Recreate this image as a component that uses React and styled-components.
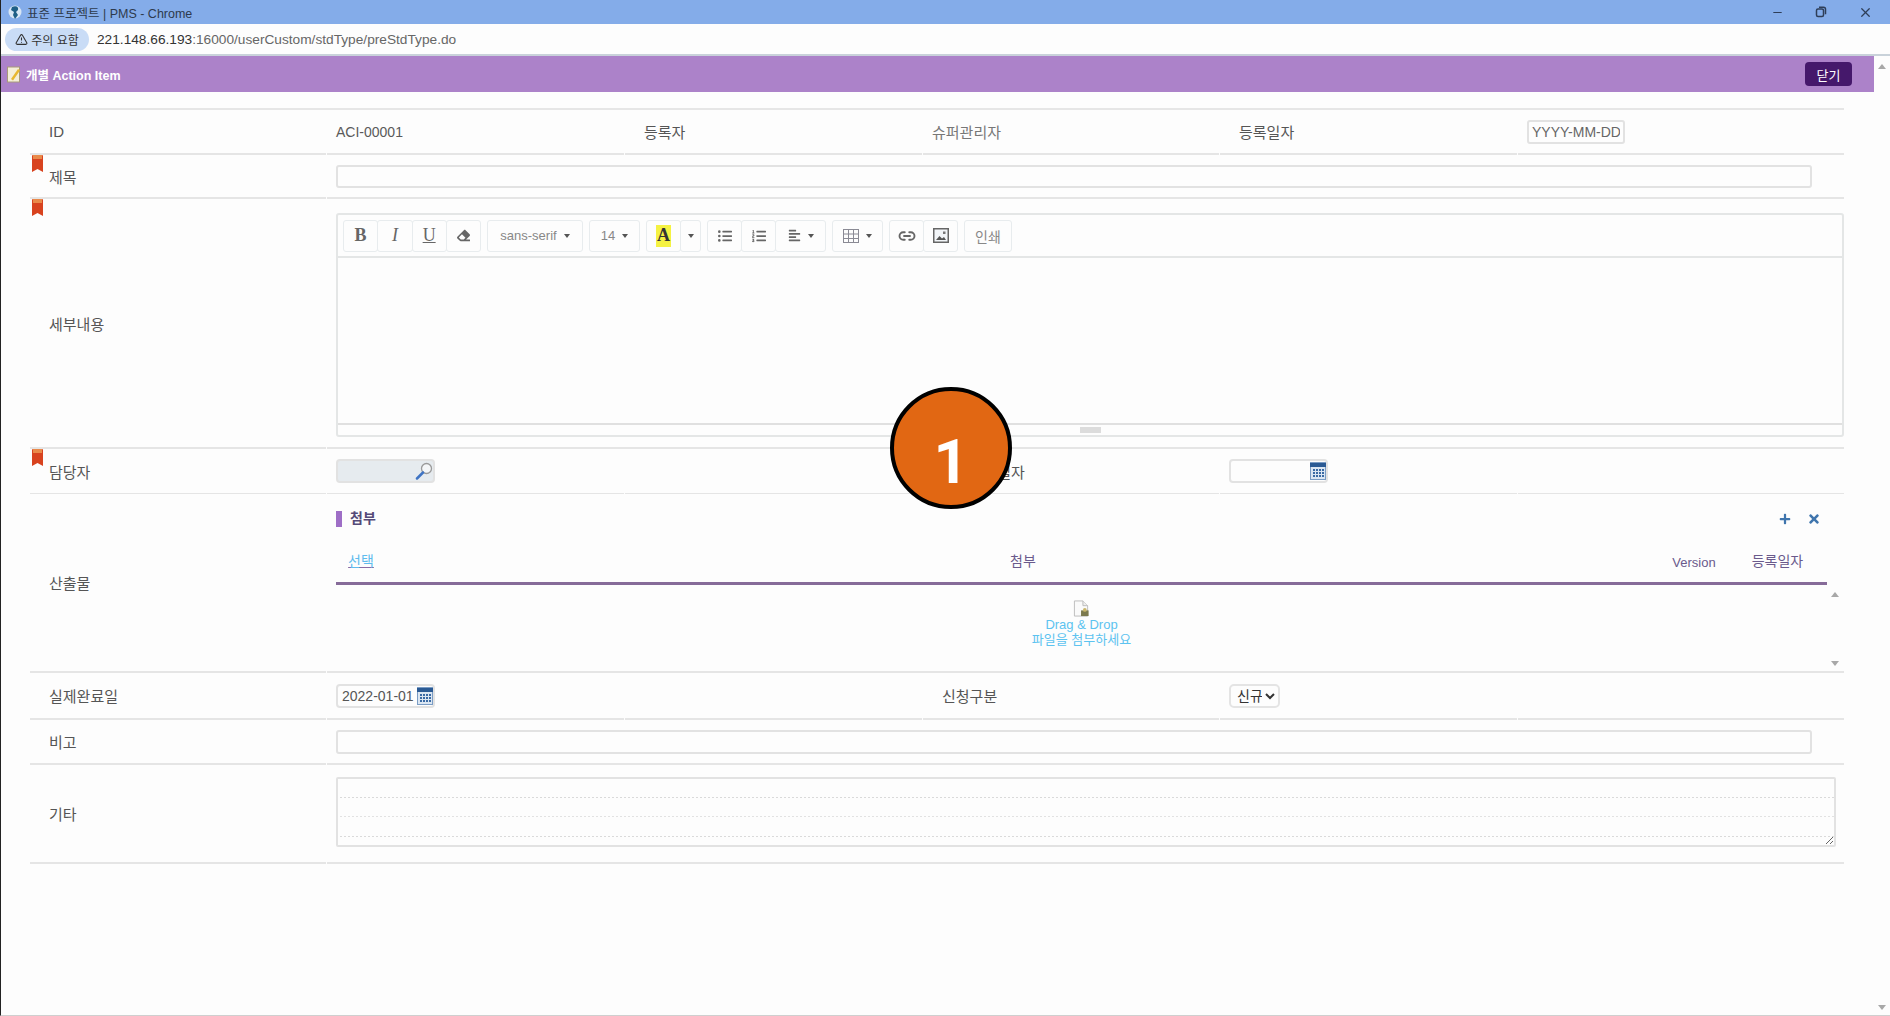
import React from "react";
import styled, { createGlobalStyle } from "styled-components";
import { Minus, X, TriangleAlert, Link2 } from "lucide-react";
import {
	FaEraser,
	FaListUl,
	FaListOl,
	FaAlignLeft,
	FaPlus,
	FaTimes,
} from "react-icons/fa";

const GlobalStyle = createGlobalStyle`
	html, body {
		margin: 0;
		padding: 0;
		background: #fdfdfd;
		overflow: hidden;
	}
	* {
		box-sizing: border-box;
	}
	body {
		font-family: "Liberation Sans", "Noto Sans CJK KR", sans-serif;
		font-size: 14px;
		color: #5a5a5a;
	}
`;

const Page = styled.div`
	width: 1890px;
	height: 1016px;
	display: flex;
	flex-direction: column;
	background: #fdfdfd;
	border-left: 1px solid #222;
	border-bottom: 1px solid #cfcfcf;
	overflow: hidden;
	position: relative;
`;

const TitleBar = styled.div`
	height: 24px;
	flex: none;
	background: #84ace9;
	display: flex;
	align-items: center;
	padding: 0 17px 0 7px;
	gap: 5px;
	font-size: 12.500px;
	color: #2d3a4d;
`;

const TitleText = styled.span`
	flex: 1;
`;

const WindowControls = styled.div`
	display: flex;
	align-items: center;
	gap: 31px;
	color: #2e3e58;
`;

const AddressBar = styled.div`
	height: 32px;
	flex: none;
	background: #fdfdfd;
	border-bottom: 2px solid #c9d2da;
	display: flex;
	align-items: center;
	padding: 0 0 0 4px;
	gap: 8px;
	font-size: 13.700px;
`;

const WarningPill = styled.div`
	width: 84px;
	height: 23px;
	border-radius: 12px;
	background: #c9dcf6;
	display: flex;
	align-items: center;
	justify-content: center;
	gap: 3px;
	font-size: 12px;
	color: #333;
`;

const UrlHost = styled.span`
	color: #333;
`;

const UrlPath = styled.span`
	color: #666;
`;

const Body = styled.div`
	flex: 1;
	display: flex;
	min-height: 0;
`;

const Main = styled.div`
	flex: 1;
	min-width: 0;
`;

const Scrollbar = styled.div`
	width: 16px;
	flex: none;
	display: flex;
	flex-direction: column;
	justify-content: space-between;
	align-items: center;
	padding: 8px 0 5px;
`;

const Arrow = styled.span`
	width: 0;
	height: 0;
	border-left: 4px solid transparent;
	border-right: 4px solid transparent;
	${(p) =>
		p.$down
			? "border-top: 5px solid #a8a8a8;"
			: "border-bottom: 5px solid #a8a8a8;"}
`;

const Header = styled.div`
	height: 36px;
	background: #ac82c9;
	display: flex;
	align-items: center;
	padding: 0 22px 0 6px;
	gap: 5px;
	color: #fff;
	font-size: 12.500px;
	font-weight: 700;
`;

const HeaderTitle = styled.span`
	flex: 1;
`;

const CloseButton = styled.button`
	width: 47px;
	height: 24px;
	border: 0;
	border-radius: 4px;
	background: #45186b;
	color: #fff;
	font: inherit;
	font-size: 13px;
	font-weight: 400;
`;

const Table = styled.div`
	width: 1814px;
	margin: 16px 0 0 29px;
	border-top: 2px solid #e6e6e6;
`;

const Row = styled.div`
	display: grid;
	grid-template-columns: 296px 297px 297px 296px 297px 326px;
	column-gap: 1px;
	height: ${(p) => p.$h}px;
`;

const Cell = styled.div`
	position: relative;
	display: flex;
	align-items: center;
	min-width: 0;
	border-bottom: ${(p) => p.$line || 2}px solid #e5e5e5;
	padding-left: 9px;
	${(p) => p.$span && "grid-column: 2 / -1;"}
`;

const Label = styled(Cell)`
	padding-left: 19px;
	font-size: 15px;
	color: #555;
`;

const KoreanValue = styled(Cell)`
	font-size: 15px;
	color: #777;
`;

const Ribbon = styled.svg`
	position: absolute;
	left: 2px;
	top: 0;
`;

const TextInput = styled.input`
	height: ${(p) => p.$h || 24}px;
	margin-top: ${(p) => p.$mt || 0}px;
	width: ${(p) => p.$w}px;
	border: 2px solid #e2e2e2;
	border-radius: 3px;
	background: #fdfdfd;
	font: inherit;
	font-size: 14px;
	color: #666;
	padding: 0 3px;
	outline: none;
`;

const FieldBox = styled.div`
	width: ${(p) => p.$w}px;
	height: 24px;
	display: flex;
	align-items: center;
	justify-content: space-between;
	border: 2px solid #e2e2e2;
	border-radius: 4px;
	background: ${(p) => p.$bg || "#fdfdfd"};
	padding: 0 0 0 4px;
	color: #555;
	font-size: 14px;
`;

const Select = styled.select`
	width: 51px;
	height: 24px;
	border: 2px solid #e4e4e4;
	border-radius: 5px;
	background: #fdfdfd;
	font: inherit;
	font-size: 14px;
	color: #333;
	padding: 0 0 0 2px;
`;

const Notes = styled.textarea`
	width: 1500px;
	height: 70px;
	margin-top: -3px;
	border: 2px solid #e2e2e2;
	border-radius: 2px;
	outline: none;
	background-color: #fdfdfd;
	background-image: linear-gradient(to right, #dadada 60%, transparent 60%),
		linear-gradient(to right, #e2e2e2 60%, transparent 60%),
		linear-gradient(to right, #dadada 60%, transparent 60%);
	background-size: 4px 1px;
	background-repeat: repeat-x;
	background-position: 2px 18px, 2px 37px, 2px 57px;
`;

const EditorCell = styled(Cell)`
	align-items: flex-start;
	flex-direction: column;
	padding-top: 14px;
`;

const Editor = styled.div`
	width: 100%;
	height: 224px;
	border: 2px solid #e4e6e6;
	border-radius: 3px;
	display: flex;
	flex-direction: column;
`;

const Toolbar = styled.div`
	height: 43px;
	flex: none;
	display: flex;
	align-items: center;
	gap: 6px;
	padding: 0 0 0 5px;
	border-bottom: 2px solid #e4e6e6;
`;

const BtnGroup = styled.div`
	display: flex;
	> * + * {
		margin-left: -1px;
	}
`;

const ToolBtn = styled.div`
	width: ${(p) => p.$w || 35}px;
	height: 32px;
	display: flex;
	align-items: center;
	justify-content: center;
	gap: 7px;
	border: 1px solid #e8ecee;
	border-radius: 3px;
	background: #fdfdfd;
	color: ${(p) => p.$c || "#666"};
	font-size: 13px;
`;

const PrintLabel = styled.span`
	font-size: 14px;
`;

const Glyph = styled.span`
	font-family: "Liberation Serif", serif;
	font-size: 18px;
	font-weight: ${(p) => (p.$b ? 700 : 400)};
	font-style: ${(p) => (p.$i ? "italic" : "normal")};
	text-decoration: ${(p) => (p.$u ? "underline" : "none")};
	color: #666;
`;

const Highlight = styled.span`
	background: #f5f242;
	color: #333;
	font-weight: 700;
	font-size: 18px;
	font-family: "Liberation Serif", serif;
	width: 15px;
	height: 22px;
	display: flex;
	align-items: center;
	justify-content: center;
`;

const Caret = styled.span`
	width: 0;
	height: 0;
	border-left: 3px solid transparent;
	border-right: 3px solid transparent;
	border-top: 4px solid #555;
`;

const EditArea = styled.div`
	flex: 1;
`;

const StatusBar = styled.div`
	height: 12px;
	flex: none;
	border-top: 2px solid #e0e0e0;
	display: flex;
	justify-content: center;
	align-items: center;
`;

const Handle = styled.span`
	width: 21px;
	height: 6px;
	background: #dcdcdc;
`;

const Attach = styled(Cell)`
	flex-direction: column;
	align-items: stretch;
	padding-right: 17px;
	padding-top: 17px;
`;

const SectionHead = styled.div`
	height: 16px;
	display: flex;
	align-items: center;
	gap: 8px;
	color: #554a78;
	font-weight: 700;
	font-size: 14px;
`;

const SectionBar = styled.span`
	width: 6px;
	height: 16px;
	background: #9e6ec6;
`;

const SectionName = styled.span`
	flex: 1;
	margin-top: -4px;
`;

const AttachActions = styled.div`
	display: flex;
	align-items: center;
	gap: 16px;
	color: #3f75ad;
	padding-right: 6px;
`;

const GridHead = styled.div`
	height: 58px;
	flex: none;
	display: grid;
	grid-template-columns: 50px 1fr 68px 99px;
	align-items: end;
	padding-bottom: 12px;
	border-bottom: 3px solid #866b99;
	font-size: 14px;
	color: #6a5a8c;
	text-align: center;
`;

const VersionHead = styled.span`
	font-size: 13px;
`;

const SelectLink = styled.span`
	color: #5fbcee;
	text-decoration: underline;
	text-decoration-color: #8a6ca5;
`;

const DropZone = styled.div`
	position: relative;
	flex: 1;
	display: flex;
	flex-direction: column;
	align-items: center;
	padding-top: 15px;
	color: #5cc3f0;
	font-size: 13px;
	line-height: 15px;
`;

const ZoneArrows = styled.div`
	position: absolute;
	right: -12px;
	top: 7px;
	bottom: 5px;
	display: flex;
	flex-direction: column;
	justify-content: space-between;
`;

const Badge = styled.div`
	position: absolute;
	left: 889px;
	top: 387px;
	width: 122px;
	height: 122px;
	border-radius: 50%;
	background: #e16713;
	border: 4px solid #000;
	color: #fff;
	font-family: Roboto, "Liberation Sans", sans-serif;
	font-size: 61px;
	font-weight: 700;
	display: flex;
	align-items: center;
	justify-content: center;
	padding-top: 28px;
`;

function Mark() {
	return (
		<Ribbon width="11" height="17" viewBox="0 0 11 17">
			<path d="M0 1q0-1 1-1h9q1 0 1 1v16l-5.500-3L0 17z" fill="#d8431f" />
			<rect x="1" y="0" width="9" height="4" fill="#e98a4a" />
		</Ribbon>
	);
}

function Calendar() {
	return (
		<svg width="16" height="18" viewBox="0 0 16 18">
			<rect width="16" height="18" fill="#dbe6f2" />
			<rect x="0.500" y="0.500" width="15" height="17" fill="none" stroke="#7a9cc4" />
			<rect x="0" y="1" width="16" height="4" fill="#2a5a94" />
			{[7, 10, 13].map((y) =>
				[3, 6, 9, 12].map((x) => (
					<rect key={`${x}-${y}`} x={x} y={y} width="2" height="2" fill="#3a6aa4" />
				))
			)}
		</svg>
	);
}

function Magnifier() {
	return (
		<svg width="18" height="18" viewBox="0 0 18 18">
			<circle cx="11.500" cy="6.500" r="5" fill="#f4f6f8" stroke="#9a9a9a" strokeWidth="1.300" />
			<path d="M8 10.500L2 16.500" stroke="#3f74c4" strokeWidth="2.500" strokeLinecap="round" />
		</svg>
	);
}

function PageIcon() {
	return (
		<svg width="17" height="17" viewBox="0 0 17 18">
			<path d="M1 1h9l5 5v11H1z" fill="#fafafa" stroke="#bbb" />
			<path d="M10 1v5h5" fill="#eee" stroke="#bbb" />
			<rect x="8" y="11" width="8" height="6" fill="#7c7a4e" />
			<circle cx="12" cy="10.500" r="2" fill="#c9b66a" />
		</svg>
	);
}

function PictureIcon() {
	return (
		<svg width="16" height="15" viewBox="0 0 16 15">
			<rect x="0.750" y="0.750" width="14.500" height="13.500" fill="#f2f5f8" stroke="#666" strokeWidth="1.500" />
			<path d="M3 12l3.500-4 2.500 2.500 2-1.500 2 3z" fill="#555" />
			<rect x="10" y="3.500" width="2.500" height="2.500" fill="#777" />
		</svg>
	);
}

function Favicon() {
	return (
		<svg width="14" height="16" viewBox="0 0 14 16">
			<circle cx="7" cy="8" r="6.500" fill="#d8e6f4" />
			<path d="M4 3c4-2 7 0 6 3L8 8l2 3-3 4-2-4 1-3-3-2z" fill="#1e5f86" />
		</svg>
	);
}

function NoteIcon() {
	return (
		<svg width="14" height="17" viewBox="0 0 14 17">
			<rect x="0.500" y="1" width="12" height="15" fill="#f5efd8" stroke="#a89a7a" />
			<path d="M4 13L11 3l2 1.500L6 14.500z" fill="#e8b830" />
		</svg>
	);
}

function Restore() {
	return (
		<svg width="12" height="12" viewBox="0 0 12 12" fill="none" stroke="currentColor" strokeWidth="1.500">
			<rect x="1.500" y="3" width="7" height="7.500" rx="1.500" />
			<path d="M4 1.200h4.500a2 2 0 0 1 2 2v5" />
		</svg>
	);
}

function EditorBox() {
	return (
		<Editor>
			<Toolbar>
				<BtnGroup>
					<ToolBtn $w={35.250}><Glyph $b>B</Glyph></ToolBtn>
					<ToolBtn $w={35.250}><Glyph $i>I</Glyph></ToolBtn>
					<ToolBtn $w={35.250}><Glyph $u>U</Glyph></ToolBtn>
					<ToolBtn $w={35.250}><FaEraser size={13} /></ToolBtn>
				</BtnGroup>
				<ToolBtn $w={96} $c="#888">sans-serif<Caret /></ToolBtn>
				<ToolBtn $w={51} $c="#888">14<Caret /></ToolBtn>
				<BtnGroup>
					<ToolBtn><Highlight>A</Highlight></ToolBtn>
					<ToolBtn $w={21}><Caret /></ToolBtn>
				</BtnGroup>
				<BtnGroup>
					<ToolBtn><FaListUl size={14} /></ToolBtn>
					<ToolBtn><FaListOl size={14} /></ToolBtn>
					<ToolBtn $w={51}><FaAlignLeft size={13} /><Caret /></ToolBtn>
				</BtnGroup>
				<ToolBtn $w={51}>
					<svg width="16" height="14" viewBox="0 0 16 14" fill="none" stroke="#8a8a94">
						<rect x="0.500" y="0.500" width="15" height="13" />
						<path d="M5.500 0.500v13M10.500 0.500v13M0.500 5h15M0.500 9.500h15" />
					</svg>
					<Caret />
				</ToolBtn>
				<BtnGroup>
					<ToolBtn><Link2 size={18} strokeWidth={2.500} /></ToolBtn>
					<ToolBtn><PictureIcon /></ToolBtn>
				</BtnGroup>
				<ToolBtn $w={48} $c="#888"><PrintLabel>인쇄</PrintLabel></ToolBtn>
			</Toolbar>
			<EditArea />
			<StatusBar><Handle /></StatusBar>
		</Editor>
	);
}

export default function App() {
	return (
		<>
			<GlobalStyle />
			<Page>
				<TitleBar>
					<Favicon />
					<TitleText>표준 프로젝트 | PMS - Chrome</TitleText>
					<WindowControls>
						<Minus size={13} />
						<Restore />
						<X size={15} />
					</WindowControls>
				</TitleBar>
				<AddressBar>
					<WarningPill>
						<TriangleAlert size={13} color="#333" />
						주의 요함
					</WarningPill>
					<span>
						<UrlHost>221.148.66.193</UrlHost>
						<UrlPath>:16000/userCustom/stdType/preStdType.do</UrlPath>
					</span>
				</AddressBar>
				<Body>
					<Main>
						<Header>
							<NoteIcon />
							<HeaderTitle>개별 Action Item</HeaderTitle>
							<CloseButton>닫기</CloseButton>
						</Header>
						<Table>
							<Row $h={45}>
								<Label>ID</Label>
								<Cell>ACI-00001</Cell>
								<Label>등록자</Label>
								<KoreanValue>슈퍼관리자</KoreanValue>
								<Label>등록일자</Label>
								<Cell>
									<TextInput $w={98} defaultValue="YYYY-MM-DD" />
								</Cell>
							</Row>
							<Row $h={44}>
								<Label><Mark />제목</Label>
								<Cell $span><TextInput $w={1476} $h={23} $mt={1} /></Cell>
							</Row>
							<Row $h={250}>
								<Label><Mark />세부내용</Label>
								<EditorCell $span><EditorBox /></EditorCell>
							</Row>
							<Row $h={45}>
								<Label $line={1}><Mark />담당자</Label>
								<Cell $line={1}>
									<FieldBox $w={99} $bg="#e6ebef"><span /><Magnifier /></FieldBox>
								</Cell>
								<Cell $line={1} />
								<Label $line={1}>완료예정일자</Label>
								<Cell $line={1}>
									<FieldBox $w={99}><span /><Calendar /></FieldBox>
								</Cell>
								<Cell $line={1} />
							</Row>
							<Row $h={179}>
								<Label>산출물</Label>
								<Attach $span>
									<SectionHead>
										<SectionBar />
										<SectionName>첨부</SectionName>
										<AttachActions>
											<FaPlus size={12} />
											<FaTimes size={14} />
										</AttachActions>
									</SectionHead>
									<GridHead>
										<SelectLink>선택</SelectLink>
										<span>첨부</span>
										<VersionHead>Version</VersionHead>
										<span>등록일자</span>
									</GridHead>
									<DropZone>
										<PageIcon />
										<span>Drag &amp; Drop</span>
										<span>파일을 첨부하세요</span>
										<ZoneArrows>
											<Arrow />
											<Arrow $down />
										</ZoneArrows>
									</DropZone>
								</Attach>
							</Row>
							<Row $h={47}>
								<Label>실제완료일</Label>
								<Cell>
									<FieldBox $w={99}>2022-01-01<Calendar /></FieldBox>
								</Cell>
								<Cell />
								<Label>신청구분</Label>
								<Cell>
									<Select defaultValue="신규">
										<option>신규</option>
									</Select>
								</Cell>
								<Cell />
							</Row>
							<Row $h={45}>
								<Label>비고</Label>
								<Cell $span><TextInput $w={1476} /></Cell>
							</Row>
							<Row $h={99}>
								<Label>기타</Label>
								<Cell $span><Notes /></Cell>
							</Row>
						</Table>
					</Main>
					<Scrollbar>
						<Arrow />
						<Arrow $down />
					</Scrollbar>
				</Body>
				<Badge>1</Badge>
			</Page>
		</>
	);
}
